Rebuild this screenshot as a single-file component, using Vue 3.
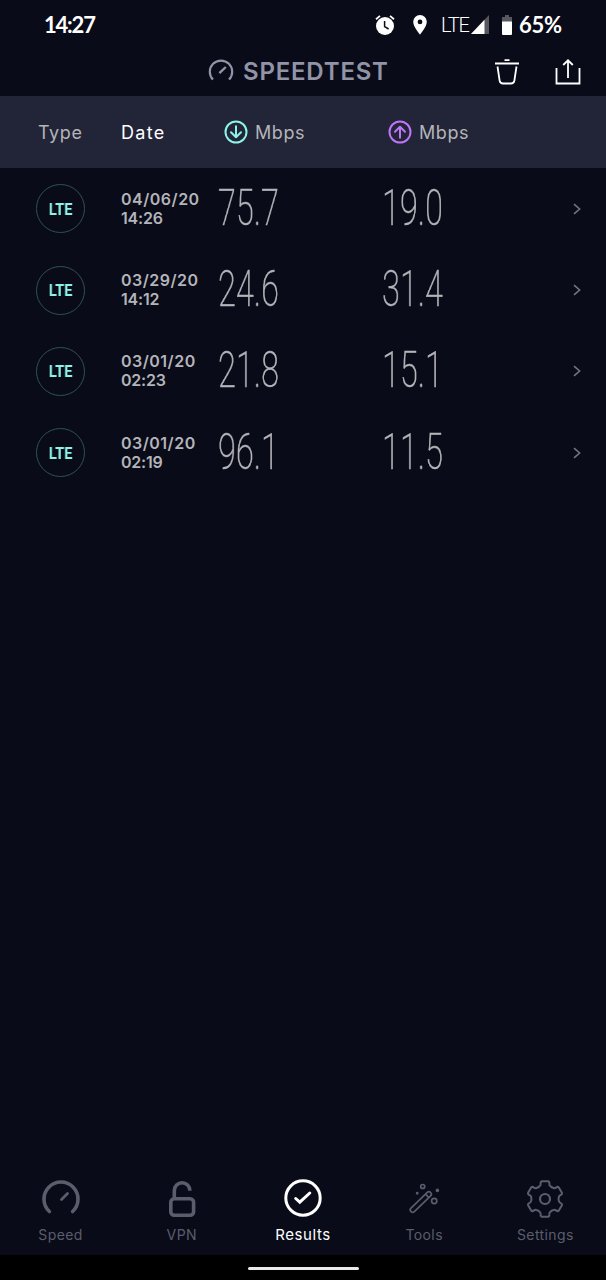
<template>
  <div class="app">
    <div class="status-bar">
      <span class="clock">14:27</span>
      <div class="status-icons">
        <svg class="alarm" viewBox="0 0 20 20">
          <circle cx="10" cy="11" r="9" fill="#fff" />
          <path d="M1 4.2 5 .9M19 4.2 15 .9" stroke="#fff" stroke-width="1.8" fill="none" />
          <path d="M9.6 6v5.6l4 2.4" stroke="#090b18" stroke-width="1.5" fill="none" />
        </svg>
        <svg class="pin" viewBox="0 0 14 20">
          <path fill="#fff" fill-rule="evenodd" d="M7 0a6.8 6.8 0 0 0-6.8 6.8C.2 12 7 19.6 7 19.6s6.8-7.6 6.8-12.8A6.8 6.8 0 0 0 7 0zm0 4.5a2.4 2.4 0 1 1 0 4.8 2.4 2.4 0 0 1 0-4.8z" />
        </svg>
        <span class="network">LTE</span>
        <svg class="signal" viewBox="0 0 18 19">
          <path d="M18 0v19H0z" fill="#56575f" />
          <path d="M13.5 4.75V19H0z" fill="#fff" />
        </svg>
        <svg class="battery" viewBox="0 0 10 20">
          <path d="M3 0h4v2h3v5H0V2h3z" fill="#56575f" />
          <path d="M0 6.5h10V19a1 1 0 0 1-1 1H1a1 1 0 0 1-1-1z" fill="#fff" />
        </svg>
        <span class="percent">65%</span>
      </div>
    </div>

    <header class="title-bar">
      <div class="brand">
        <svg class="brand-icon" viewBox="0 0 26 23">
          <path d="M5 20.6A11.2 11.2 0 1 1 21 20.6" />
          <path d="M11.4 14.2 17.8 8" stroke-width="2.4" />
        </svg>
        <span>SPEEDTEST</span>
      </div>
      <div class="actions">
        <svg class="trash" viewBox="0 0 24 26">
          <path d="M0 4.5h24M9.5 1.2h5" />
          <path d="M2.5 7.5 4.6 21.5Q5.2 24.5 8 24.5h8Q18.8 24.5 19.4 21.5L21.5 7.5" />
        </svg>
        <svg class="share" viewBox="0 0 26 26">
          <path d="M1.5 9v15.5h23V9M13 19V1.8M8.2 6 13 1.3 17.8 6" />
        </svg>
      </div>
    </header>

    <div class="table-head">
      <span class="col-type">Type</span>
      <span class="col-date active">Date</span>
      <span class="col-speed">
        <svg class="arrow down" viewBox="0 0 24 24">
          <circle cx="12" cy="12" r="10.5" />
          <path d="M12 6.2v11M7 12.2l5 5 5-5" />
        </svg>
        Mbps
      </span>
      <span class="col-speed">
        <svg class="arrow up" viewBox="0 0 24 24">
          <circle cx="12" cy="12" r="10.5" />
          <path d="M12 17.8v-11M7 11.8l5-5 5 5" />
        </svg>
        Mbps
      </span>
    </div>

    <main class="results">
      <div v-for="(item, index) in results" :key="index" class="row">
        <div class="badge"><span>{{ item.type }}</span></div>
        <div class="date">
          <div class="day">{{ item.date }}</div>
          <div>{{ item.time }}</div>
        </div>
        <div class="value"><span>{{ item.download }}</span></div>
        <div class="value"><span>{{ item.upload }}</span></div>
        <svg class="chevron" viewBox="0 0 8 12">
          <path d="M1 1.2 6.6 6 1 10.8" />
        </svg>
      </div>
    </main>

    <nav class="tabs">
      <div v-for="tab in tabs" :key="tab.name" class="tab" :class="{ active: tab.name === current }">
        <svg v-if="tab.name === 'Speed'" viewBox="0 0 40 40" stroke-width="3.6">
          <path d="M8.4 32.5A17 17 0 1 1 31.6 32.5" stroke-linecap="round" />
          <path d="M20.5 20.5 26.5 14.5" stroke-width="2.8" stroke-linecap="round" />
        </svg>
        <svg v-else-if="tab.name === 'VPN'" viewBox="0 0 40 40" stroke-width="3.6">
          <rect x="8.8" y="19.7" width="22.8" height="16.6" rx="3.5" />
          <path d="M12.3 20v-8.300a7.800 8 0 0 1 15.600 0" />
        </svg>
        <svg v-else-if="tab.name === 'Results'" viewBox="0 0 40 40" stroke-width="3">
          <circle cx="20" cy="19" r="17.2" />
          <path d="M12.7 19.5 16.8 23.2 26.800 14" stroke-linecap="round" />
        </svg>
        <svg v-else-if="tab.name === 'Tools'" viewBox="0 0 40 40" stroke-width="1.7">
          <rect x="-13.7" y="-2.4" width="27.4" height="4.8" rx="2.4" transform="translate(16.8 23) rotate(-44)" />
          <path d="M21.5 15.1 24.7 18.3" />
          <circle cx="18.7" cy="7.5" r="2" />
          <circle cx="30.2" cy="22" r="2.6" />
          <circle cx="33.4" cy="11.3" r="1" fill="currentColor" />
          <circle cx="13.2" cy="14.2" r=".6" fill="currentColor" />
        </svg>
        <svg v-else viewBox="0 0 40 40" stroke-width="2" stroke-linejoin="round">
          <path :d="gear" />
          <circle cx="20" cy="20" r="5" stroke-width="2.2" />
        </svg>
        <span>{{ tab.name }}</span>
      </div>
    </nav>

    <div class="gesture-bar"><i></i></div>
  </div>
</template>

<script setup>
import { ref } from 'vue'

const results = ref([
  { type: 'LTE', date: '04/06/20', time: '14:26', download: '75.7', upload: '19.0' },
  { type: 'LTE', date: '03/29/20', time: '14:12', download: '24.6', upload: '31.4' },
  { type: 'LTE', date: '03/01/20', time: '02:23', download: '21.8', upload: '15.1' },
  { type: 'LTE', date: '03/01/20', time: '02:19', download: '96.1', upload: '11.5' }
])

const tabs = [
  { name: 'Speed' },
  { name: 'VPN' },
  { name: 'Results' },
  { name: 'Tools' },
  { name: 'Settings' }
]
const current = ref('Results')

// six teeth, with a rounded valley between each pair
const polar = (r, deg) => {
  const a = (deg * Math.PI) / 180
  return `${(20 + r * Math.cos(a)).toFixed(2)} ${(20 + r * Math.sin(a)).toFixed(2)}`
}
const gear = [0, 60, 120, 180, 240, 300]
  .map((step, i) => {
    const c = step - 90
    return `${i ? 'L' : 'M'}${polar(14, c - 22)}Q${polar(14.4, c - 17)} ${polar(15.8, c - 16)}` +
      `Q${polar(18, c - 15)} ${polar(18, c - 10)}L${polar(18, c + 10)}` +
      `Q${polar(18, c + 15)} ${polar(15.8, c + 16)}Q${polar(14.4, c + 17)} ${polar(14, c + 22)}` +
      `Q${polar(13.2, c + 30)} ${polar(14, c + 38)}`
  })
  .join('') + 'Z'
</script>

<style>
body {
  margin: 0;
  background: #090b18;
}
</style>

<style scoped>
.app {
  display: flex;
  flex-direction: column;
  width: 606px;
  height: 1280px;
  overflow: hidden;
  background: #090b18;
  color: #b4b4b9;
  font-family: Inter, "Liberation Sans", sans-serif;
}

svg {
  display: block;
  flex: none;
  fill: none;
}

.status-bar {
  display: flex;
  justify-content: space-between;
  align-items: center;
  height: 48px;
  padding: 1px 44px 0 44px;
  box-sizing: border-box;
  color: #fff;
  font-family: Lato, "Liberation Sans", sans-serif;
}

.clock {
  font-size: 22px;
  font-weight: 700;
  letter-spacing: -1.2px;
}

.status-icons {
  display: flex;
  align-items: center;
}

.alarm {
  width: 20px;
  height: 20px;
  margin-right: 18px;
}

.pin {
  width: 14px;
  height: 20px;
  margin-right: 14px;
}

.network {
  width: 27px;
  font-family: Roboto, sans-serif;
  font-size: 20px;
  font-weight: 300;
  letter-spacing: -1.2px;
}

.signal {
  width: 18px;
  height: 19px;
  margin: 0 13px 0 3px;
}

.battery {
  width: 10px;
  height: 20px;
  margin-right: 7px;
}

.percent {
  width: 43px;
  font-size: 22px;
  font-weight: 700;
  letter-spacing: -0.3px;
  white-space: nowrap;
}

.title-bar {
  display: flex;
  justify-content: space-between;
  align-items: center;
  height: 48px;
  padding: 0 25px 1px 208px;
  box-sizing: border-box;
}

.brand {
  display: flex;
  align-items: center;
  gap: 9px;
  color: #9193a7;
  font-size: 24px;
  font-weight: 600;
  letter-spacing: 0.8px;
}

.brand-icon {
  width: 26px;
  height: 23px;
  margin-top: -3px;
  stroke: currentColor;
  stroke-width: 2.2;
}

.actions {
  display: flex;
  gap: 36px;
}

.actions svg {
  height: 26px;
  stroke: #fff;
  stroke-width: 1.8;
}

.trash {
  width: 24px;
}

.share {
  width: 26px;
}

.table-head,
.row {
  display: grid;
  grid-template-columns: 83px 97px 164px 1fr 8px;
  align-items: center;
  padding: 0 25px 0 38px;
}

.table-head {
  height: 72px;
  flex: none;
  background: #222437;
  font-size: 18px;
  letter-spacing: 0.6px;
}

.table-head .active {
  color: #fff;
  letter-spacing: 1.3px;
}

.col-speed {
  display: flex;
  align-items: center;
  gap: 7px;
  padding-left: 6px;
}

.arrow {
  width: 24px;
  height: 24px;
  stroke-width: 2;
  stroke-linecap: round;
  stroke-linejoin: round;
}

.down {
  stroke: #8df3e7;
}

.up {
  stroke: #bd75f5;
}

.results {
  flex: 1;
}

.row {
  height: 81.4px;
}

.badge {
  display: flex;
  justify-content: center;
  align-items: center;
  width: 49px;
  height: 49px;
  margin-left: -2px;
  box-sizing: border-box;
  border: 1px solid #2f5157;
  border-radius: 50%;
  color: #8df3e7;
  font-family: Roboto, sans-serif;
  font-size: 17px;
  font-weight: 700;
}

.badge span {
  transform: scaleX(0.87);
  will-change: transform;
}

.date {
  font-size: 16px;
  font-weight: 600;
  line-height: 19px;
  letter-spacing: -0.2px;
}

.day {
  letter-spacing: 0.5px;
}

.value {
  height: 54px;
}

.value span {
  display: inline-block;
  font-family: Roboto, sans-serif;
  font-size: 50px;
  font-weight: 200;
  line-height: 52px;
  -webkit-text-stroke: 0.4px currentColor;
  transform: scaleX(0.65);
  transform-origin: left;
  will-change: transform;
}

.chevron {
  width: 8px;
  height: 12px;
  stroke: #74757e;
  stroke-width: 1.6;
}

.tabs {
  display: grid;
  grid-template-columns: repeat(5, 1fr);
  height: 76px;
  flex: none;
}

.tab {
  display: flex;
  flex-direction: column;
  align-items: center;
  color: #5b5d6d;
  font-size: 14px;
  letter-spacing: 0.4px;
}

.tab svg {
  width: 40px;
  height: 40px;
  stroke: currentColor;
}

.tab span {
  margin-top: 7px;
  line-height: 18px;
}

.tab.active {
  color: #fff;
}

.tab.active span {
  font-size: 15px;
  letter-spacing: 0.6px;
}

.gesture-bar {
  display: flex;
  justify-content: center;
  height: 25px;
  flex: none;
  background: #000;
}

.gesture-bar i {
  width: 111px;
  height: 3px;
  margin-top: 12px;
  border-radius: 2px;
  background: #e9e9e9;
}
</style>
